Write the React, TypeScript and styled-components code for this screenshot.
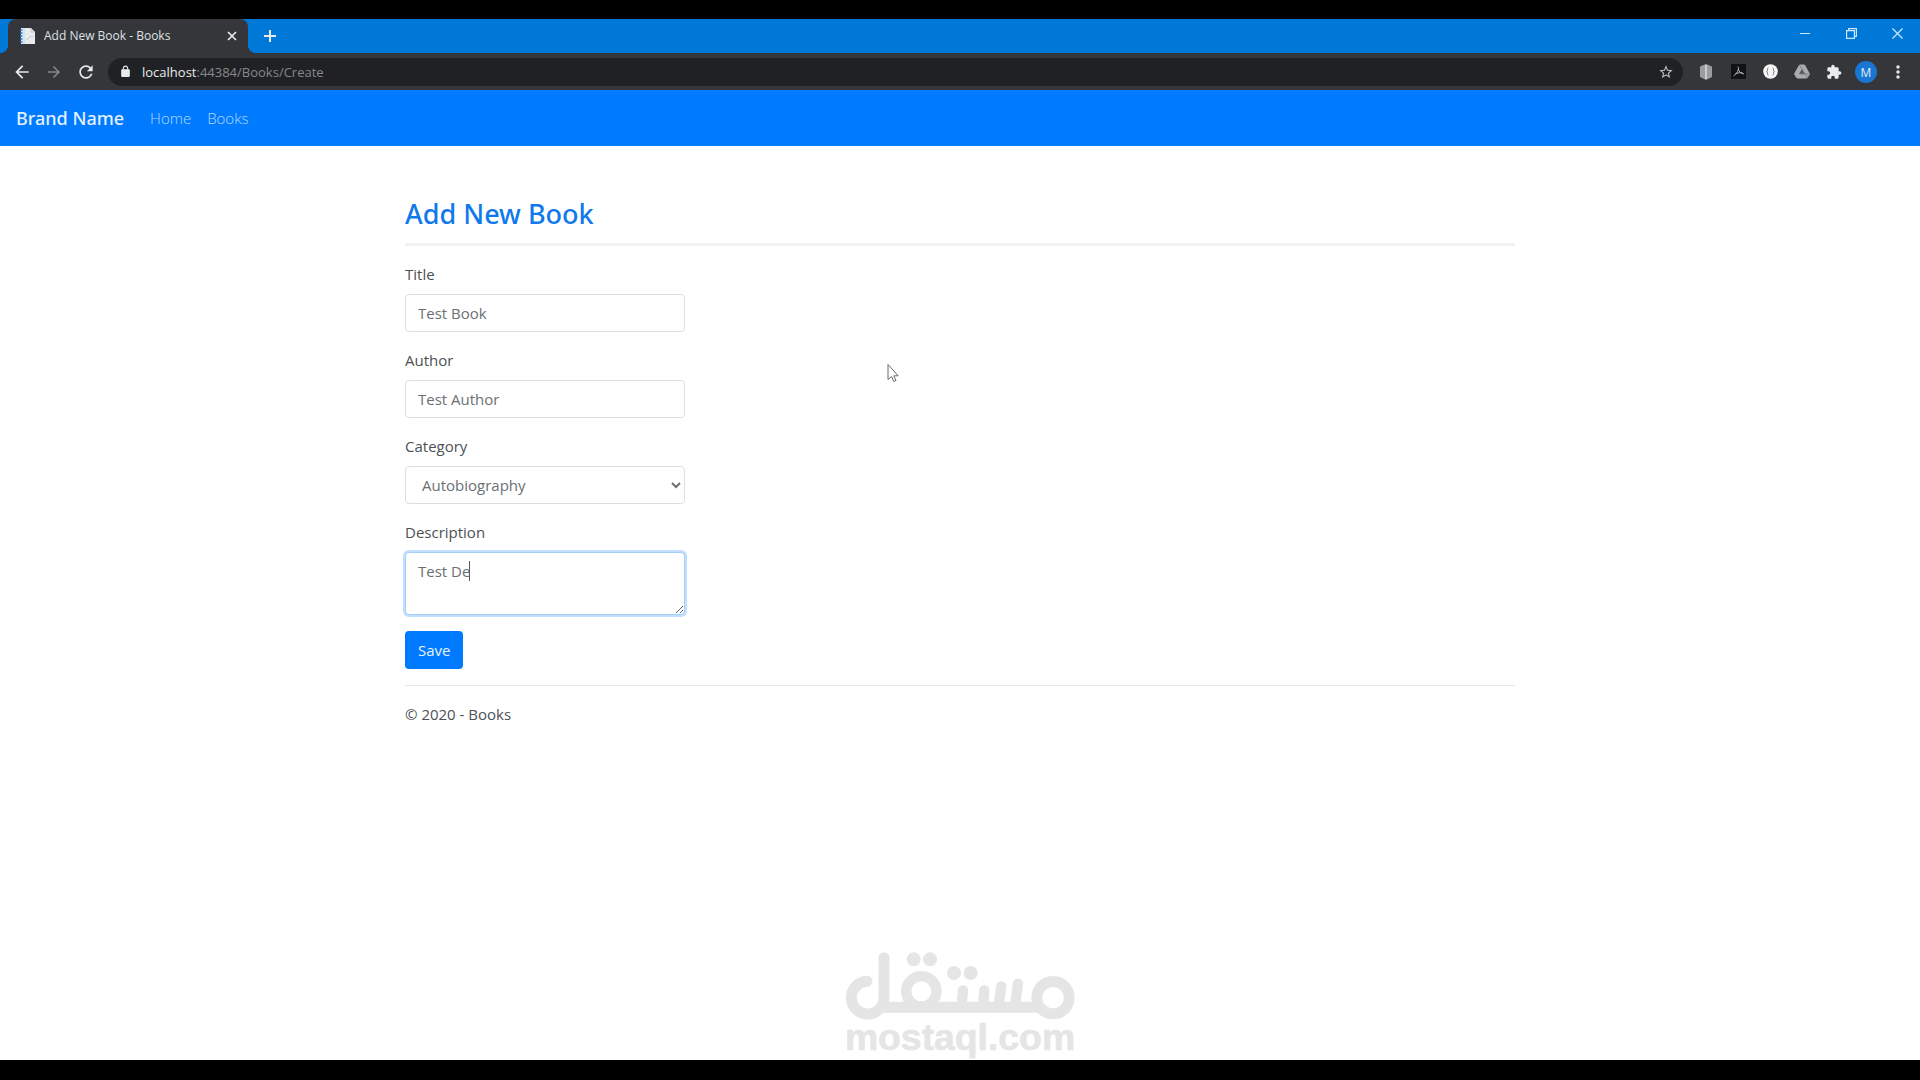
import React, { useState } from "react";
import styled, { createGlobalStyle } from "styled-components";

const uiFont = '"Open Sans", "Noto Sans", sans-serif';
const headingFont = '"Noto Sans", "Open Sans", sans-serif';

const GlobalStyle = createGlobalStyle`
  *, *::before, *::after { box-sizing: border-box; }
  body {
    margin: 0;
    background: #000;
    color: #4d5155;
    font: 400 15px/24px ${uiFont};
  }
  button, input, select, textarea { font: inherit; margin: 0; }
`;

const Screen = styled.div`
  position: relative;
  display: flex;
  flex-direction: column;
  min-height: 100vh;
  padding: 19px 0 20px;
  background: #000;
`;

const TabStrip = styled.div`
  display: flex;
  height: 34px;
  padding-left: 8px;
  background: #0078d7;
`;

const Tab = styled.div`
  position: relative;
  display: flex;
  align-items: center;
  gap: 8px;
  width: 240px;
  padding: 0 8px 0 11px;
  border-radius: 8px 8px 0 0;
  background: #35363a;
  color: #dfe1e5;
  font-size: 12px;

  &::before, &::after {
    content: "";
    position: absolute;
    bottom: 0;
    width: 8px;
    height: 8px;
  }
  &::before { right: 100%; background: radial-gradient(circle at 0 0, transparent 8px, #35363a 8px); }
  &::after { left: 100%; background: radial-gradient(circle at 100% 0, transparent 8px, #35363a 8px); }
`;

const TabTitle = styled.span`
  flex: 1;
  white-space: nowrap;
`;

const IconButton = styled.button<{ $w?: number; $color?: string }>`
  display: flex;
  align-items: center;
  justify-content: center;
  width: ${(p) => p.$w ?? 32}px;
  height: 28px;
  padding: 0;
  border: 0;
  background: none;
  color: ${(p) => p.$color ?? "#e8eaed"};
`;

const NewTab = styled(IconButton)`
  margin: 3px 0 0 8px;
`;

const WindowControls = styled.div`
  display: flex;
  margin-left: auto;
`;

const Toolbar = styled.div`
  display: flex;
  align-items: center;
  height: 37px;
  padding: 0 6px;
  background: #35363a;
`;

const AddressBar = styled.div`
  display: flex;
  flex: 1;
  align-items: center;
  height: 28px;
  margin: 0 7px 0 6px;
  padding: 0 1px 0 11px;
  border-radius: 14px;
  background: #202124;
  color: #e8eaed;
`;

const Url = styled.span`
  flex: 1;
  padding-left: 10px;
  color: #85888c;
  font-size: 13px;

  b { color: #e8eaed; font-weight: 400; }
`;

const Avatar = styled.span`
  display: grid;
  place-items: center;
  width: 22px;
  height: 22px;
  border-radius: 50%;
  background: #1976d2;
  color: #e3f0ff;
  font-size: 12px;
`;

const Page = styled.div`
  flex: 1;
  background: #fff;
`;

const Navbar = styled.nav`
  display: flex;
  align-items: center;
  gap: 16px;
  height: 56px;
  padding: 0 16px;
  background: #007bff;
`;

const Brand = styled.a`
  margin-right: 10px;
  color: #e2f0ff;
  font-family: ${headingFont};
  font-size: 18px;
  font-weight: 500;
  text-decoration: none;
`;

const NavLink = styled.a`
  color: #b5d9ff;
  font-size: 15px;
  font-weight: 300;
  text-decoration: none;
`;

const Container = styled.div`
  max-width: 1140px;
  margin: 0 auto;
  padding: 50px 15px 0;
`;

const Heading = styled.h1`
  margin: 0 0 11px;
  color: #1079ec;
  font-family: ${headingFont};
  font-size: 27px;
  font-weight: 500;
  line-height: 36px;
`;

const Rule = styled.hr<{ $thick?: boolean }>`
  height: ${(p) => (p.$thick ? 3 : 1)}px;
  margin: 0 0 16px;
  border: 0;
  background: ${(p) => (p.$thick ? "#f2f2f2" : "#e6e6e6")};
`;

const Field = styled.div`
  display: flex;
  flex-direction: column;
  width: 280px;
  margin-bottom: 16px;
`;

const Label = styled.label`
  margin-bottom: 8px;
`;

const control = `
  display: block;
  width: 100%;
  height: 38px;
  padding: 6px 12px;
  border: 1px solid #dcdfe2;
  border-radius: 4px;
  outline: none;
  background: #fff;
  color: #6b6f74;
`;

const TextInput = styled.input`${control}`;
const Select = styled.select`${control}`;

const AreaBox = styled.div`
  position: relative;
`;

const TextArea = styled.textarea`
  ${control}
  height: 63px;
  border-color: #a5cffb;
  box-shadow: 0 0 0 2px #c3deff;
  caret-color: transparent;
  resize: vertical;
`;

const Caret = styled.span`
  position: absolute;
  top: 9px;
  left: 64px;
  width: 1px;
  height: 20px;
  background: #55585c;
`;

const SaveButton = styled.button`
  display: block;
  height: 38px;
  margin-bottom: 16px;
  padding: 0 13px;
  border: 0;
  border-radius: 4px;
  background: #007bff;
  color: #e8f3ff;
`;

const Pointer = styled.svg`
  position: absolute;
  left: 887px;
  top: 363px;
`;

const Watermark = styled.svg`
  position: absolute;
  bottom: 20px;
  left: 50%;
  transform: translateX(-50%);
`;

const Glyph = ({ d, size = 20 }: { d: string; size?: number }) => (
  <svg width={size} height={size} viewBox="0 0 24 24" fill="currentColor" aria-hidden="true">
    <path d={d} />
  </svg>
);

const paths = {
  back: "M20 11H7.83l5.59-5.59L12 4l-8 8 8 8 1.41-1.41L7.83 13H20v-2z",
  forward: "M12 4l-1.41 1.41L16.17 11H4v2h12.17l-5.58 5.59L12 20l8-8-8-8z",
  reload:
    "M17.65 6.35C16.2 4.9 14.21 4 12 4c-4.42 0-7.99 3.58-7.99 8s3.57 8 7.99 8c3.73 0 6.84-2.55 7.73-6h-2.08c-.82 2.33-3.04 4-5.65 4-3.31 0-6-2.69-6-6s2.69-6 6-6c1.66 0 3.14.69 4.22 1.78L13 11h7V4l-2.35 2.35z",
  lock: "M18 8h-1V6c0-2.76-2.24-5-5-5S7 3.24 7 6v2H6c-1.1 0-2 .9-2 2v10c0 1.1.9 2 2 2h12c1.1 0 2-.9 2-2V10c0-1.1-.9-2-2-2zm-9 0V6c0-1.66 1.34-3 3-3s3 1.34 3 3v2H9z",
  star: "M22 9.24l-7.19-.62L12 2 9.19 8.63 2 9.24l5.46 4.73L5.82 21 12 17.27 18.18 21l-1.63-7.03L22 9.24zM12 15.4l-3.76 2.27 1-4.28-3.32-2.88 4.38-.38L12 6.1l1.71 4.04 4.38.38-3.32 2.88 1 4.28L12 15.4z",
  puzzle:
    "M20.5 11H19V7c0-1.1-.9-2-2-2h-4V3.5C13 2.12 11.88 1 10.5 1S8 2.12 8 3.5V5H4c-1.1 0-1.99.9-1.99 2v3.8H3.5c1.49 0 2.7 1.21 2.7 2.7s-1.21 2.7-2.7 2.7H2V20c0 1.1.9 2 2 2h3.8v-1.5c0-1.49 1.21-2.7 2.7-2.7 1.49 0 2.7 1.21 2.7 2.7V22H17c1.1 0 2-.9 2-2v-4h1.5c1.38 0 2.5-1.12 2.5-2.5S21.88 11 20.5 11z",
};

const line = { fill: "none", stroke: "currentColor" } as const;

export default function App() {
  const [title, setTitle] = useState("Test Book");
  const [author, setAuthor] = useState("Test Author");
  const [description, setDescription] = useState("Test De");

  return (
    <Screen>
      <GlobalStyle />
      <TabStrip>
        <Tab>
          <svg width="17" height="17" viewBox="0 0 17 17" aria-hidden="true">
            <path d="M2 0h10l4 4v12H2z" fill="#e9ecee" />
            <path d="M12 0v4h4M8 12q3-5 6-3" fill="none" stroke="#bfc5ca" />
            <path d="M2.500 1v14" stroke="#3a9ae8" strokeWidth="2" strokeDasharray="2 1" />
            <path d="M5 0v16" stroke="#b9d7ee" />
          </svg>
          <TabTitle>Add New Book - Books</TabTitle>
          <IconButton $w={16} aria-label="Close tab">
            <svg width="10" height="10" viewBox="0 0 10 10" {...line} strokeWidth="1.7"><path d="M1 1l8 8M9 1L1 9" /></svg>
          </IconButton>
        </Tab>
        <NewTab $w={28} aria-label="New tab">
          <svg width="12" height="12" viewBox="0 0 12 12" {...line} strokeWidth="2"><path d="M6 0v12M0 6h12" /></svg>
        </NewTab>
        <WindowControls>
          <IconButton $w={46} $color="#cfe6fa" aria-label="Minimize">
            <svg width="10" height="10" viewBox="0 0 10 10" {...line}><path d="M0 5.500h10" /></svg>
          </IconButton>
          <IconButton $w={46} $color="#cfe6fa" aria-label="Restore">
            <svg width="11" height="11" viewBox="0 0 11 11" {...line} strokeWidth="1.2"><path d="M.6 2.600h7.800v7.800H.6zM2.600 2.600V.6h7.800v7.800h-2" /></svg>
          </IconButton>
          <IconButton $w={46} $color="#cfe6fa" aria-label="Close window">
            <svg width="11" height="11" viewBox="0 0 11 11" {...line} strokeWidth="1.3"><path d="M.5.5l10 10M10.500.5l-10 10" /></svg>
          </IconButton>
        </WindowControls>
      </TabStrip>

      <Toolbar>
        <IconButton aria-label="Back"><Glyph d={paths.back} /></IconButton>
        <IconButton $color="#85888c" aria-label="Forward"><Glyph d={paths.forward} size={18} /></IconButton>
        <IconButton aria-label="Reload"><Glyph d={paths.reload} size={20} /></IconButton>
        <AddressBar>
          <Glyph d={paths.lock} size={13} />
          <Url><b>localhost</b>:44384/Books/Create</Url>
          <IconButton $color="#bdc1c6" aria-label="Bookmark this page"><Glyph d={paths.star} size={16} /></IconButton>
        </AddressBar>
        <IconButton aria-label="Shield extension">
          <svg width="14" height="16" viewBox="0 0 14 16"><path d="M7 0l6 2.500v10.500L7 16l-6-3V2.500z" fill="#9a9c9f" /><path d="M7 1v14" stroke="#c9cbcd" strokeWidth="2" /></svg>
        </IconButton>
        <IconButton aria-label="PDF extension">
          <svg width="15" height="15" viewBox="0 0 15 15"><path d="M0 0h15v15H0z" fill="#111214" /><path d="M7 2.500c1.500 3-1 7-4.500 9.500M7.200 5c.8 3 3 4.500 5.800 5M4.500 9.800c2-1 4.500-1.300 7-1" fill="none" stroke="#b8babd" /></svg>
        </IconButton>
        <IconButton aria-label="JSON extension">
          <svg width="15" height="15" viewBox="0 0 15 15"><circle cx="7.500" cy="7.500" r="7.300" fill="#f5f5f5" /><path d="M5.500 4Q4 4 4.500 6q0 1.500-1 1.500 1 0 1 1.500-.5 2 1 2M9.500 4q1.500 0 1 2 0 1.500 1 1.500-1 0-1 1.500.5 2-1 2" fill="none" stroke="#888" /></svg>
        </IconButton>
        <IconButton aria-label="Drive extension">
          <svg width="16" height="15" viewBox="0 0 16 15"><path d="M5.500 1h5L15.500 10l-2.500 4H3L.5 10z" fill="#a9abad" strokeLinejoin="round" stroke="#a9abad" /><path d="M8 5l3 5H5z" fill="#55575a" /><path d="M5.500 1l8 13M15.500 10H6" stroke="#77797c" strokeWidth=".8" /></svg>
        </IconButton>
        <IconButton aria-label="Extensions"><Glyph d={paths.puzzle} size={16} /></IconButton>
        <IconButton aria-label="Profile"><Avatar>M</Avatar></IconButton>
        <IconButton aria-label="Menu">
          <svg width="4" height="14" viewBox="0 0 4 14" fill="currentColor"><circle cx="2" cy="2" r="1.700" /><circle cx="2" cy="7" r="1.700" /><circle cx="2" cy="12" r="1.700" /></svg>
        </IconButton>
      </Toolbar>

      <Page>
        <Navbar>
          <Brand href="#">Brand Name</Brand>
          <NavLink href="#">Home</NavLink>
          <NavLink href="#">Books</NavLink>
        </Navbar>
        <Container>
          <Heading>Add New Book</Heading>
          <Rule $thick />
          <form onSubmit={(e) => e.preventDefault()}>
            <Field>
              <Label htmlFor="title">Title</Label>
              <TextInput id="title" value={title} onChange={(e) => setTitle(e.target.value)} />
            </Field>
            <Field>
              <Label htmlFor="author">Author</Label>
              <TextInput id="author" value={author} onChange={(e) => setAuthor(e.target.value)} />
            </Field>
            <Field>
              <Label htmlFor="category">Category</Label>
              <Select id="category" defaultValue="Autobiography">
                <option>Autobiography</option>
              </Select>
            </Field>
            <Field>
              <Label htmlFor="description">Description</Label>
              <AreaBox>
                <TextArea id="description" value={description} onChange={(e) => setDescription(e.target.value)} />
                <Caret aria-hidden="true" />
              </AreaBox>
            </Field>
            <SaveButton type="submit">Save</SaveButton>
          </form>
          <Rule />
          <footer>© 2020 - Books</footer>
        </Container>
      </Page>

      <Pointer width="12" height="20" viewBox="0 0 12 20" aria-hidden="true">
        <path d="M1 1.500v15l3.500-3 2.300 5 2.200-1-2.200-4.700h4.400z" fill="#fff" stroke="#6a6a6a" />
      </Pointer>

      <Watermark width="234" height="110" viewBox="69 60 702 330" aria-label="mostaql.com">
        <g fill="none" stroke="#e5e5e5" strokeWidth="33" strokeLinecap="round">
          <circle cx="699" cy="203" r="48.500" />
          <circle cx="304" cy="184" r="45.500" strokeWidth="31" />
          <path d="M192 232H660" />
          <path d="M141 154A49 49 0 1 0 192 203V83" />
          <path d="M429 181l-4 44M493 181l-4 44M544 169l-8 56M594 161l-9 64" strokeWidth="31" />
        </g>
        <g fill="#e5e5e5">
          <circle cx="281" cy="88" r="21" />
          <circle cx="330" cy="88" r="21" />
          <circle cx="402" cy="129" r="21" />
          <circle cx="452" cy="129" r="21" />
          <text x="420" y="359" textAnchor="middle" fontFamily='"Liberation Sans", Arial, sans-serif' fontWeight="700" fontSize="112" stroke="#e5e5e5" strokeWidth="2" strokeLinejoin="round">mostaql.com</text>
        </g>
      </Watermark>
    </Screen>
  );
}
